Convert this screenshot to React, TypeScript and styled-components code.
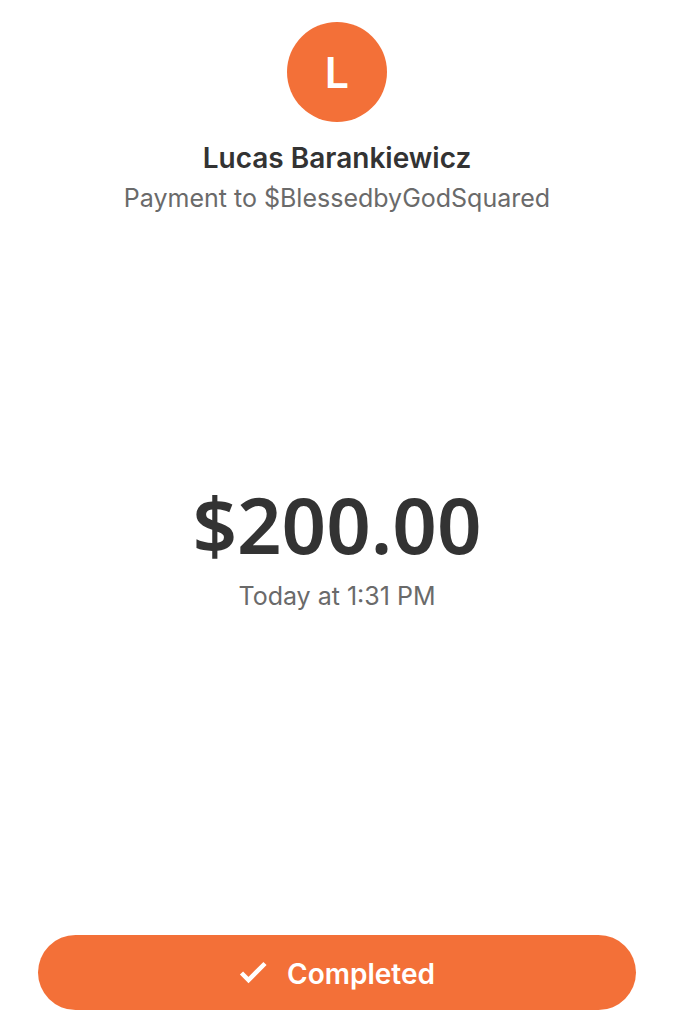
import React from "react";
import styled, { createGlobalStyle } from "styled-components";

const GlobalStyle = createGlobalStyle`
  *, *::before, *::after { box-sizing: border-box; }
  body {
    margin: 0;
    background: #fff;
    color: #333;
    font-family: Inter, "Noto Sans", sans-serif;
  }
`;

const Screen = styled.main`
  min-height: 100vh;
  display: flex;
  flex-direction: column;
  align-items: center;
  padding: 22px 37px 13px 38px;
  text-align: center;
`;

const Recipient = styled.header`
  display: flex;
  flex-direction: column;
  align-items: center;
`;

const Avatar = styled.div`
  width: 100px;
  height: 100px;
  margin-bottom: 16px;
  border-radius: 50%;
  display: grid;
  place-items: center;
  background: #f37038;
  color: #fff;
  font-size: 43px;
  font-weight: 600;
`;

const Name = styled.h1`
  margin: 0;
  font-size: 28px;
  line-height: 40px;
  font-weight: 600;
`;

const Detail = styled.p`
  margin: 0;
  font-size: 25px;
  line-height: 40px;
  color: #6a6a6a;
`;

const Payment = styled.section`
  margin: auto 0;
  padding-bottom: 65px;
`;

const Amount = styled.p`
  margin: 0;
  font-family: "Noto Sans", sans-serif;
  font-size: 78px;
  line-height: 104px;
  font-weight: 600;
`;

const StatusButton = styled.button`
  width: 100%;
  height: 75px;
  padding: 3px 24px 0;
  border: 0;
  border-radius: 38px;
  display: flex;
  align-items: center;
  justify-content: center;
  gap: 20px;
  background: #f37038;
  color: #fff;
  font: inherit;
  font-size: 28px;
  font-weight: 600;
`;

const Check = styled.svg`
  width: 28px;
  height: 24px;
  overflow: visible;
`;

export default function App() {
  return (
    <>
      <GlobalStyle />
      <Screen>
        <Recipient>
          <Avatar>L</Avatar>
          <Name>Lucas Barankiewicz</Name>
          <Detail>Payment to $BlessedbyGodSquared</Detail>
        </Recipient>
        <Payment>
          <Amount>$200.00</Amount>
          <Detail>Today at 1:31 PM</Detail>
        </Payment>
        <StatusButton type="button">
          <Check viewBox="0 0 28 24" aria-hidden="true">
            <path d="M2.5 11l7 7L26 1.5" fill="none" stroke="currentColor" strokeWidth="4.5" />
          </Check>
          Completed
        </StatusButton>
      </Screen>
    </>
  );
}
